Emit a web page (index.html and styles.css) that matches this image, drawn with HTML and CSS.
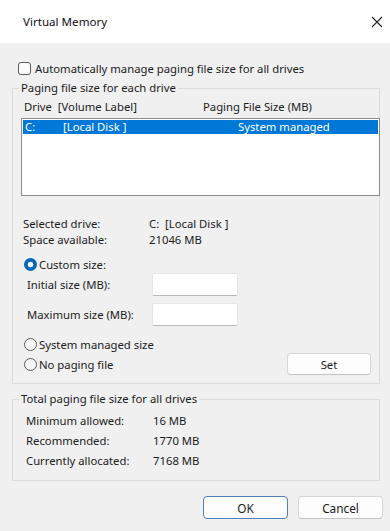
FILE: index.html
```html
<!DOCTYPE html>
<html>
<head>
<meta charset="utf-8">
<link rel="stylesheet" href="styles.css">
</head>
<body>
<div class="window">
  <div class="titlebar">
    <span class="title">Virtual Memory</span>
    <svg class="close" width="12" height="12" viewBox="0 0 12 12"><path d="M1 1L11 11M11 1L1 11" stroke="#222" stroke-width="1.1" fill="none"/></svg>
  </div>
  <div class="content">
    <div class="check-row"><span class="checkbox"></span><span>Automatically manage paging file size for all drives</span></div>
    <fieldset class="group group-drives">
      <legend>Paging file size for each drive</legend>
      <div class="list-head"><span class="col-drive">Drive&nbsp; [Volume Label]</span><span class="col-size">Paging File Size (MB)</span></div>
      <div class="listbox">
        <div class="list-row selected"><span class="c-drive">C:</span><span class="c-label">[Local Disk ]</span><span class="c-size">System managed</span></div>
      </div>
      <div class="info">
        <div class="info-row"><span class="info-label">Selected drive:</span><span>C:&nbsp; [Local Disk ]</span></div>
        <div class="info-row"><span class="info-label">Space available:</span><span>21046 MB</span></div>
      </div>
      <div class="radio-row r-custom"><span class="radio on"></span><span>Custom size:</span></div>
      <div class="field-row f-initial"><span class="field-label">Initial size (MB):</span><span class="textbox"></span></div>
      <div class="field-row f-max"><span class="field-label">Maximum size (MB):</span><span class="textbox"></span></div>
      <div class="radio-row r-system"><span class="radio"></span><span>System managed size</span></div>
      <div class="radio-row r-none"><span class="radio"></span><span class="grow">No paging file</span><span class="btn btn-set">Set</span></div>
    </fieldset>
    <fieldset class="group group-total">
      <legend>Total paging file size for all drives</legend>
      <div class="total-row"><span class="total-label">Minimum allowed:</span><span>16 MB</span></div>
      <div class="total-row"><span class="total-label">Recommended:</span><span>1770 MB</span></div>
      <div class="total-row"><span class="total-label">Currently allocated:</span><span>7168 MB</span></div>
    </fieldset>
  </div>
  <div class="actions">
    <span class="btn btn-ok">OK</span>
    <span class="btn btn-cancel">Cancel</span>
  </div>
</div>
</body>
</html>
```
FILE: styles.css
```css
* { box-sizing: border-box; }
html, body { margin: 0; padding: 0; }
body {
  width: 390px;
  height: 531px;
  overflow: hidden;
  background: #f0f0f0;
  font-family: "Noto Sans", "Segoe UI", sans-serif;
  font-size: 11.3px;
  color: #1b1b1b;
}
.window { height: 531px; display: flex; flex-direction: column; }
.titlebar {
  height: 43px;
  flex: none;
  background: #ffffff;
  display: flex;
  align-items: center;
  justify-content: space-between;
  padding: 0 7px 0 23px;
}
.title { font-size: 11.6px; color: #111; }
.content { padding: 0 10px 0 12px; }
.check-row {
  margin-top: 17px;
  height: 16px;
  display: flex;
  align-items: center;
  gap: 4px;
  padding-left: 6px;
}
.checkbox {
  width: 13px; height: 13px;
  border: 1px solid #5c5c5c;
  border-radius: 3px;
  background: #fbfbfb;
  flex: none;
}
.group {
  margin: 0;
  padding: 0;
  border: 1px solid #dcdcdc;
  min-width: 0;
}
.group legend {
  margin-left: 6px;
  padding: 0 2px;
  line-height: 16px;
  height: 16px;
}
.group-drives { margin-top: 4px; padding-bottom: 8px; }
.list-head {
  margin-top: 3px;
  height: 16px;
  line-height: 16px;
  display: flex;
  padding-left: 11px;
}
.col-drive { width: 179px; }
.listbox {
  margin: 3px -1px 0 8px;
  height: 78px;
  background: #ffffff;
  border: 1px solid #8c8c8c;
  padding: 1px;
}
.list-row {
  height: 14px;
  line-height: 14px;
  display: flex;
  padding-left: 2px;
}
.list-row.selected { background: #0078d7; color: #ffffff; }
.c-drive { width: 38px; }
.c-label { width: 175px; }
.info { margin-top: 20px; padding-left: 10px; }
.info-row { height: 16px; line-height: 16px; display: flex; }
.info-label { width: 126px; }
.radio-row {
  height: 16px;
  display: flex;
  align-items: center;
  gap: 2px;
  padding-left: 11px;
}
.radio {
  width: 13px; height: 13px;
  border-radius: 50%;
  border: 1px solid #5c5c5c;
  background: #f6f6f6;
  flex: none;
}
.radio.on {
  border: none;
  background: radial-gradient(circle, #ffffff 0 2.6px, #0067c0 3.2px);
}
.r-custom { margin-top: 8px; }
.field-row {
  display: flex;
  align-items: center;
  padding-left: 14px;
  height: 23px;
}
.field-label { width: 125px; }
.f-initial { margin-top: 1px; }
.f-max { margin-top: 7px; }
.textbox {
  width: 86px;
  height: 23px;
  background: #ffffff;
  border: 1px solid #e6e6e6;
  border-bottom-color: #b9b9b9;
  border-radius: 2px;
}
.r-system { margin-top: 10px; }
.r-none { margin-top: 1px; height: 22px; padding-right: 8px; }
.grow { flex: 1; }
.btn {
  display: flex;
  align-items: center;
  justify-content: center;
  background: #fdfdfd;
  border: 1px solid #d6d6d6;
  border-bottom-color: #c2c2c2;
  border-radius: 4px;
  height: 22px;
}
.btn-set { width: 84px; }
.group-total { margin-top: 7px; padding-bottom: 9px; }
.total-row {
  height: 20px;
  line-height: 20px;
  display: flex;
  padding-left: 13px;
}
.group-total legend + .total-row { margin-top: 4px; }
.total-label { width: 127px; }
.actions {
  margin-top: 15px;
  display: flex;
  justify-content: flex-end;
  gap: 10px;
  padding-right: 7px;
}
.actions .btn { width: 85px; height: 23px; font-size: 11.8px; }
.btn-ok { border: 1px solid #4f7fb5; }
```
